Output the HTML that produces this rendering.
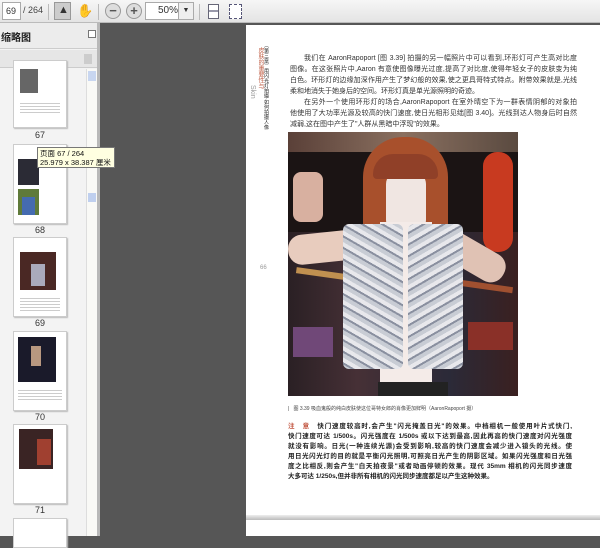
<!DOCTYPE html>
<html><head><meta charset="utf-8"><style>
*{margin:0;padding:0;box-sizing:border-box}
body{width:600px;height:536px;overflow:hidden;position:relative;background:#565656;font-family:"Liberation Sans","Noto Sans CJK SC",sans-serif}
.a{position:absolute}
.tb{left:0;top:0;width:600px;height:23px;background:linear-gradient(#f6f6f6,#e4e4e4);border-bottom:1px solid #bbb}
.panel{left:0;top:23px;width:100px;height:513px;background:#f3f3f3;border-right:3px solid #b8b8b8}
.th{position:absolute;left:13px;width:54px;background:#fff;border:1px solid #ccc;box-shadow:1px 1px 1px #bbb}
.lbl{position:absolute;left:13px;width:54px;text-align:center;font-size:9px;color:#333}
.page{left:246px;top:25px;width:354px;height:490px;background:#fff}
.t{position:absolute;font-size:7px;line-height:10px;height:10px;overflow:hidden;color:#333;white-space:normal;text-align:justify;text-align-last:justify;font-family:"Liberation Sans","Noto Sans CJK SC",sans-serif}
.p{left:44px;width:287px}
.n{font-size:6.5px;color:#222;font-weight:bold;left:42px;width:284px}
</style></head><body>
<div class="a tb">
 <div class="a" style="left:2px;top:2px;width:19px;height:18px;background:#fff;border:1px solid #aaa;font-size:9px;padding:3px 0 0 3px;color:#333">69</div>
 <div class="a" style="left:23px;top:5px;font-size:9px;color:#444">/ 264</div>
 <div class="a" style="left:48px;top:4px;width:1px;height:16px;background:#bbb"></div>
 <div class="a" style="left:54px;top:2px;width:17px;height:18px;background:#ccc;border:1px solid #999"></div>
 <div class="a" style="left:58px;top:4px;font-size:11px;color:#333">▲</div>
 <div class="a" style="left:77px;top:3px;font-size:13px;color:#555">✋</div>
 <div class="a" style="left:98px;top:4px;width:1px;height:16px;background:#bbb"></div>
 <div class="a" style="left:105px;top:3px;width:16px;height:16px;border-radius:50%;background:#ddd;border:1px solid #999;text-align:center;font-size:13px;line-height:13px;font-weight:bold;color:#555">−</div>
 <div class="a" style="left:126px;top:3px;width:16px;height:16px;border-radius:50%;background:#ddd;border:1px solid #999;text-align:center;font-size:13px;line-height:14px;font-weight:bold;color:#555">+</div>
 <div class="a" style="left:145px;top:2px;width:47px;height:18px;background:#fff;border:1px solid #aaa;font-size:10px;padding:2px 0 0 12px;color:#333">50%</div>
 <div class="a" style="left:178px;top:2px;width:16px;height:18px;background:#eee;border:1px solid #aaa;font-size:7px;text-align:center;line-height:16px;color:#333">▼</div>
 <div class="a" style="left:199px;top:4px;width:1px;height:16px;background:#bbb"></div>
 <div class="a" style="left:208px;top:4px;width:11px;height:15px;border:1px solid #667;background:linear-gradient(#fff 40%,#99a 40%,#99a 55%,#fff 55%)"></div>
 <div class="a" style="left:229px;top:4px;width:13px;height:15px;border:1px dashed #557;background:#fff"></div>
</div>
<div class="a panel">
 <div class="a" style="left:0;top:0;width:97px;height:26px;background:#ececec;border-bottom:1px solid #ccc;font-size:10px;font-weight:bold;padding:6px 0 0 1px;color:#222">缩略图</div>
 <div class="a" style="left:88px;top:7px;width:8px;height:8px;border:1px solid #777;background:#fff"></div>
 <div class="a" style="left:0;top:27px;width:97px;height:18px;background:#e6e6e6;border-bottom:1px solid #ccc"></div>
 <div class="a" style="left:84px;top:31px;width:8px;height:10px;background:#ccc"></div>
 <div class="a" style="left:86px;top:46px;width:11px;height:467px;background:#f9f9f6;border-left:1px solid #ddd"></div>
 <div class="a" style="left:88px;top:48px;width:8px;height:10px;background:#c8d6f0"></div>
 <div class="a" style="left:88px;top:170px;width:8px;height:9px;background:#bfcfee"></div>
</div>
<div class="th" style="top:60px;height:68px"><div class="a" style="left:6px;top:8px;width:18px;height:24px;background:#666"></div><div class="a" style="left:6px;top:40px;width:40px;height:14px;background:repeating-linear-gradient(#fff 0 2px,#ccc 2px 3px)"></div></div>
<div class="lbl" style="top:130px">67</div>
<div class="th" style="top:144px;height:80px"><div class="a" style="left:4px;top:14px;width:21px;height:26px;background:#2b2b35"></div><div class="a" style="left:4px;top:44px;width:21px;height:26px;background:#5f7a3a"></div><div class="a" style="left:8px;top:52px;width:13px;height:18px;background:#456bb0"></div></div>
<div class="lbl" style="top:225px">68</div>
<div class="th" style="top:237px;height:80px"><div class="a" style="left:6px;top:14px;width:36px;height:38px;background:#4a2824"></div><div class="a" style="left:17px;top:26px;width:14px;height:22px;background:#aab"></div><div class="a" style="left:6px;top:58px;width:40px;height:16px;background:repeating-linear-gradient(#fff 0 2px,#ccc 2px 3px)"></div></div>
<div class="lbl" style="top:318px">69</div>
<div class="th" style="top:331px;height:80px"><div class="a" style="left:4px;top:5px;width:38px;height:45px;background:#1a1a2a"></div><div class="a" style="left:17px;top:14px;width:10px;height:20px;background:#b89880"></div><div class="a" style="left:4px;top:56px;width:44px;height:14px;background:repeating-linear-gradient(#fff 0 2px,#ccc 2px 3px)"></div></div>
<div class="lbl" style="top:412px">70</div>
<div class="th" style="top:424px;height:80px"><div class="a" style="left:5px;top:4px;width:34px;height:40px;background:#3a2424"></div><div class="a" style="left:23px;top:14px;width:14px;height:26px;background:#a04030"></div></div>
<div class="lbl" style="top:505px">71</div>
<div class="th" style="top:518px;height:30px"></div>
<div class="a" style="left:37px;top:147px;width:78px;height:21px;background:#ffffe1;border:1px solid #777;font-size:7.5px;line-height:9px;padding:1px 2px;color:#111;white-space:nowrap;overflow:hidden">页面 67 / 264<br>25.979 x 38.387 厘米</div>

<div class="a page">
 <div class="a" style="left:17px;top:18px;font-size:5px;writing-mode:vertical-rl;color:#222;line-height:6px;white-space:nowrap">〔第三章〕用闪光灯拍摄·如何拍摄人像</div>
 <div class="a" style="left:10px;top:22px;font-size:6px;writing-mode:vertical-rl;color:#c06048;line-height:7px;white-space:nowrap">皮肤的重要性与</div>
 <div class="a" style="left:3px;top:60px;font-size:7px;writing-mode:vertical-rl;color:#999;line-height:7px">Skin</div>
 <div class="a" style="left:14px;top:240px;font-size:6px;color:#999">66</div>
 <div class="t p" style="top:29px;left:58px;width:273px">我们在 AaronRapoport [图 3.39] 拍摄的另一幅照片中可以看到,环形灯可产生高对比度</div>
 <div class="t p" style="top:40px">图像。在这张照片中,Aaron 有意使图像曝光过度,提高了对比度,使得年轻女子的皮肤变为纯</div>
 <div class="t p" style="top:51px">白色。环形灯的边缘加深作用产生了梦幻般的效果,使之更具哥特式特点。附带效果就是,光线</div>
 <div class="t" style="top:62px;left:44px">柔和地消失于她身后的空间。环形灯真是单光源照明的奇迹。</div>
 <div class="t p" style="top:73px;left:58px;width:273px">在另外一个使用环形灯的场合,AaronRapoport 在室外晴空下为一群表情阴郁的对象拍照。</div>
 <div class="t p" style="top:84px">他使用了大功率光源及较高的快门速度,使日光相形见绌[图 3.40]。光线到达人物身后时自然</div>
 <div class="t" style="top:95px;left:44px">减弱,这在图中产生了"人群从黑暗中浮现"的效果。</div>
 <div class="a" style="left:42px;top:107px;width:230px;height:264px;overflow:hidden;background:#1b1414">
  <div class="a" style="left:0;top:0;width:230px;height:20px;background:linear-gradient(90deg,#5a4038,#8a7060,#5a4a40)"></div>
  <div class="a" style="left:0;top:100px;width:230px;height:164px;background:linear-gradient(90deg,#2a2024,#463036 30%,#2b2a38 70%,#3a2020)"></div>
  <div class="a" style="left:5px;top:195px;width:40px;height:30px;background:#704878"></div>
  <div class="a" style="left:180px;top:190px;width:45px;height:28px;background:#8a3028"></div>
  <div class="a" style="left:195px;top:20px;width:30px;height:100px;border-radius:14px;background:#c83a20"></div>
  <div class="a" style="left:8px;top:140px;width:70px;height:6px;background:#c09050;transform:rotate(8deg)"></div>
  <div class="a" style="left:150px;top:150px;width:75px;height:6px;background:#a05030;transform:rotate(8deg)"></div>
  <div class="a" style="left:5px;top:40px;width:30px;height:50px;background:#d8b0a0;border-radius:8px"></div>
  <div class="a" style="left:0;top:100px;width:80px;height:30px;background:#e8ccbe;border-radius:14px;transform:rotate(-6deg)"></div>
  <div class="a" style="left:150px;top:110px;width:70px;height:30px;background:#e0c2b4;border-radius:14px;transform:rotate(30deg)"></div>
  <div class="a" style="left:75px;top:5px;width:85px;height:100px;border-radius:40px 40px 10px 10px;background:#a8502c"></div>
  <div class="a" style="left:98px;top:40px;width:40px;height:60px;border-radius:12px;background:#f0e6e2"></div>
  <div class="a" style="left:85px;top:22px;width:65px;height:25px;background:#904028;border-radius:20px 20px 4px 4px"></div>
  <div class="a" style="left:92px;top:90px;width:52px;height:160px;background:#f4ebe8"></div>
  <div class="a" style="left:55px;top:92px;width:60px;height:145px;background:repeating-linear-gradient(30deg,#c8ccd4 0 4px,#8a90a0 4px 6px,#e8e8ec 6px 10px);border-radius:6px"></div>
  <div class="a" style="left:120px;top:92px;width:55px;height:145px;background:repeating-linear-gradient(-30deg,#c8ccd4 0 4px,#8a90a0 4px 6px,#e8e8ec 6px 10px);border-radius:6px"></div>
  <div class="a" style="left:90px;top:250px;width:70px;height:14px;background:#222"></div>
 </div>
 <div class="a" style="left:42px;top:380px;font-size:5px;color:#444;white-space:nowrap">|&nbsp;&nbsp; 图 3.39 吸血鬼般的纯白皮肤使这位哥特女郎的肖像更加鲜明（AaronRapoport 摄）</div>
 <div class="t n" style="top:397px"><span style="color:#c0503a">注　意</span>　快门速度较高时,会产生"闪光掩盖日光"的效果。中档相机一般使用叶片式快门,</div>
 <div class="t n" style="top:407px">快门速度可达 1/500s。闪光强度在 1/500s 或以下达到最高,因此再高的快门速度对闪光强度</div>
 <div class="t n" style="top:417px">就没有影响。日光(一种连续光源)会受到影响,较高的快门速度会减少进入镜头的光线。使</div>
 <div class="t n" style="top:427px">用日光闪光灯的目的就是平衡闪光照明,可照亮日光产生的阴影区域。如果闪光强度和日光强</div>
 <div class="t n" style="top:437px">度之比相反,则会产生"白天拍夜景"或者动画停顿的效果。现代 35mm 相机的闪光同步速度</div>
 <div class="t n" style="top:447px;text-align-last:left">大多可达 1/250s,但并非所有相机的闪光同步速度都足以产生这种效果。</div>
</div>
<div class="a" style="left:246px;top:515px;width:354px;height:5px;background:linear-gradient(#eee,#bbb)"></div>
<div class="a" style="left:246px;top:520px;width:354px;height:16px;background:#fff"></div>
</body></html>
